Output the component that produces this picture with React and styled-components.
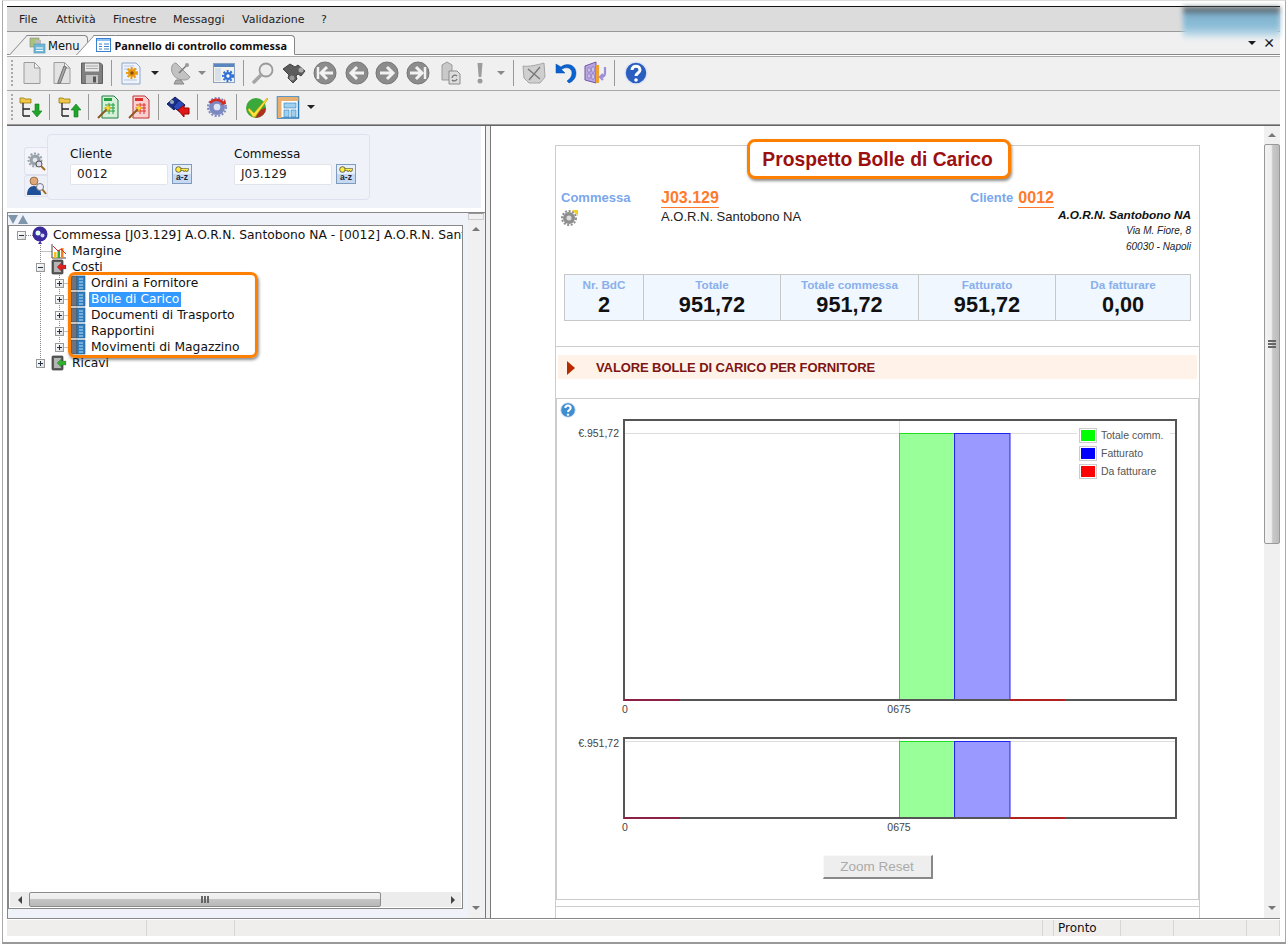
import React from "react";
import styled, { createGlobalStyle } from "styled-components";

const Global = createGlobalStyle`
  html, body { margin: 0; padding: 0; background: #fff; }
  *, *::before, *::after { box-sizing: border-box; }
  svg { flex: none; }
  body { font-family: "DejaVu Sans", sans-serif; font-size: 12px; color: #111; }
`;

const WEB = `"Liberation Sans", Arial, sans-serif`;

const Frame = styled.div`
  margin-left: 2px; width: 1284px; height: 944px;
  border: 1px solid #aaa; border-top: 1px solid #ddd; border-bottom: 2px solid #999;
  padding: 5px 5px 6px 4px; display: flex; flex-direction: column; overflow: hidden;
`;
const AppWin = styled.div`
  flex: 1; display: flex; flex-direction: column; border-top: 1px solid #111; background: #fff; min-height: 0;
`;
const MenuBar = styled.div`
  position: relative; height: 25px; flex: none; background: #dcdcdc; border-bottom: 1px solid #999;
  display: flex; align-items: center; padding-left: 12px; font-size: 11px; color: #222;
`;
const MenuItem = styled.span`
  width: ${p => p.$w}px; flex: none;
`;
const Blob = styled.div`
  position: absolute; right: 0; top: 0; width: 97px; height: 31px; z-index: 3;
  background: linear-gradient(180deg, #4a4a4a 0, #7fb2cf 28%, #8fbfd9 65%, #d8e8f0 100%);
  filter: blur(2.5px);
`;
const TabStrip = styled.div`
  height: 23px; flex: none; background: #f0f0f0; position: relative;
  border-bottom: 1px solid #888; padding: 2px 0 0 22px; display: flex; align-items: flex-end;
  &::after { content: ""; position: absolute; left: 0; right: 0; bottom: -3px; height: 1px; background: #aaa; }
`;
const Tab = styled.div`
  position: relative; height: 20px; display: flex; align-items: center; gap: ${p => (p.$active ? 4 : 2)}px;
  margin-left: ${p => p.$ml || 0}px; padding: 0 7px 0 0;
  background: ${p => (p.$active ? "#fff" : "#f0f0f0")};
  font: ${p => (p.$active ? `700 10.9px "Noto Sans", sans-serif` : `11.5px "DejaVu Sans", sans-serif`)}; color: #111;
  border: 1px solid #888; border-left: 0; border-bottom: ${p => (p.$active ? "1px solid #fff" : "0")};
  border-radius: 0 4px 0 0; margin-bottom: -1px; z-index: ${p => (p.$active ? 2 : 1)};
  &::before {
    content: ""; position: absolute; left: -11px; top: -1px; bottom: ${p => (p.$active ? "-1px" : "0")}; width: 22px;
    background: ${p => (p.$active ? "#fff" : "#f0f0f0")}; border-left: 1px solid #888; border-top: 1px solid #888;
    transform: skewX(-42deg); z-index: -1;
  }
`;
const TabTools = styled.div`
  position: absolute; right: 5px; top: 3px; display: flex; align-items: center; gap: 7px; font-size: 14px;
`;
const TabDown = styled.span`
  width: 0; height: 0; border-left: 4px solid transparent; border-right: 4px solid transparent; border-top: 4px solid #111;
`;
const Toolbar = styled.div`
  height: ${p => p.$h}px; flex: none; background: #f0f0f0; display: flex; align-items: center;
  border-bottom: ${p => (p.$line ? "1px solid #a8a8a8" : "0")}; margin-top: ${p => p.$mt || 0}px;
  padding-bottom: ${p => p.$pb || 0}px;
`;
const Grip = styled.div`
  width: 10px; height: 26px; flex: none;
  background: repeating-linear-gradient(180deg, #aaa 0 2px, transparent 2px 4px) 4px 0 / 2px 100% no-repeat;
`;
const Tool = styled.div`
  width: ${p => p.$w}px; flex: none; display: flex; justify-content: center; align-items: center;
`;
const Sep = styled.div`
  width: ${p => p.$w}px; height: 26px; flex: none; position: relative;
  &::after { content: ""; position: absolute; left: 50%; top: 0; bottom: 0; width: 1px; background: #999; }
`;
const Caret = styled.span`
  width: 0; height: 0; border-left: 4px solid transparent; border-right: 4px solid transparent;
  border-top: 4px solid ${p => (p.$dim ? "#888" : "#222")};
`;
const ThickLine = styled.div`
  height: 2px; flex: none; background: #999; border-bottom: 1px solid #666;
`;
const Main = styled.div`
  height: 792px; flex: none; display: flex; overflow: hidden;
`;
const LeftPanel = styled.div`
  width: 478px; flex: none; display: flex; flex-direction: column; background: #f0f2fa;
`;
const FilterArea = styled.div`
  height: 82px; flex: none; display: flex; align-items: flex-start; padding: 8px 0 0 17px; background: #f0f2fa; border-right: 4px solid #fff;
`;
const SideTabs = styled.div`
  width: 23px; flex: none; margin-top: 13px; display: flex; flex-direction: column;
`;
const SideTab = styled.div`
  height: ${p => p.$h}px; display: flex; align-items: center; justify-content: center;
  background: ${p => (p.$on ? "#f4f5fb" : "#eef0f8")};
  border: 1px solid #dfe2ee; border-right: 0; border-radius: 3px 0 0 3px;
`;
const Card = styled.div`
  width: 323px; height: 66px; flex: none; border: 1px solid #dfe2ee; border-radius: 4px; display: flex; padding: 10px 0 0 22px;
`;
const Field = styled.div`
  width: 164px; flex: none;
`;
const FieldLabel = styled.div`
  height: 19px; line-height: 18px; font-size: 12px; color: #111;
`;
const FieldRow = styled.div`
  display: flex; gap: 4px;
`;
const FieldInput = styled.div`
  width: 98px; height: 21px; background: #fff; border: 1px solid #e2e4ea; border-radius: 2px;
  padding-left: 6px; line-height: 19px; font-size: 12px; color: #222;
`;
const KeyBtn = styled.div`
  width: 20px; height: 20px; border: 1px solid #7f9cbf; display: flex; flex-direction: column; align-items: center;
  background: linear-gradient(180deg, #e6eefa 0 50%, #c6d9f3 50%);
  font: 700 8.5px/9px ${WEB}; color: #223; padding-top: 1px;
`;
const GapStrip = styled.div`
  height: 4px; flex: none; background: #fff;
`;
const TreeArea = styled.div`
  flex: 1; min-height: 0; display: flex; border-top: 1px solid #888;
`;
const TreePane = styled.div`
  width: 461px; flex: none; display: flex; flex-direction: column; padding: 0 0 9px 0; border-left: 1px solid #888;
`;
const TreeHead = styled.div`
  height: 12px; flex: none; display: flex; align-items: flex-start; padding-top: 2px;
`;
const Tri = styled.span`
  width: 0; height: 0; border-left: 5.5px solid transparent; border-right: 5.5px solid transparent;
  ${p => (p.$up ? "border-bottom: 9px solid #7f95ac;" : "border-top: 9px solid #7f95ac;")}
`;
const TreeBox = styled.div`
  width: 455px; flex: 1; min-height: 0; background: #fff; border: 1px solid #888; display: flex; flex-direction: column; padding-bottom: 1px;
`;
const TreeBody = styled.div`
  flex: 1; min-height: 0; position: relative; overflow: hidden; padding-top: 1px; font-size: 12.3px; white-space: nowrap;
`;
const Guides = styled.svg`
  position: absolute; left: 0; top: 0;
`;
const Row = styled.div`
  position: relative; height: 16px; display: flex; align-items: center; padding-left: ${p => p.$indent}px;
`;
const Expander = styled.span`
  width: 9px; height: 9px; flex: none; position: relative; margin-right: 6px;
  ${p => (p.$none ? "" : `border: 1px solid #999; background: linear-gradient(135deg, #fff, #ddd);
  &::before { content: ""; position: absolute; left: 1px; right: 1px; top: 3px; height: 1px; background: #234; }`)}
  ${p => (p.$plus ? `&::after { content: ""; position: absolute; top: 1px; bottom: 1px; left: 3px; width: 1px; background: #234; }` : "")}
`;
const RowLabel = styled.span`
  margin-left: 3px; padding: 0 2px; line-height: 15px;
  background: ${p => (p.$sel ? "#3399ff" : "transparent")}; color: ${p => (p.$sel ? "#fff" : "#111")};
`;
const Highlight = styled.div`
  position: relative;
  &::after {
    content: ""; position: absolute; left: 59px; top: -3px; width: 190px; height: 86px;
    border: 3px solid #ff8000; border-radius: 7px; box-shadow: 1px 2px 3px rgba(0,0,0,.45), inset 0 0 1px rgba(0,0,0,.2);
    pointer-events: none;
  }
`;
const HScroll = styled.div`
  height: 15px; flex: none; margin: 0 1px; background: #ececec; display: flex; align-items: center;
`;
const ArrowSlot = styled.div`
  width: ${p => p.$w}px; flex: none; display: flex; justify-content: center;
`;
const Arr = styled.span`
  width: 0; height: 0;
  ${p => p.$d === "l" && "border-top: 4px solid transparent; border-bottom: 4px solid transparent; border-right: 4px solid #444;"}
  ${p => p.$d === "r" && "border-top: 4px solid transparent; border-bottom: 4px solid transparent; border-left: 4px solid #444;"}
  ${p => p.$d === "u" && "border-left: 4px solid transparent; border-right: 4px solid transparent; border-bottom: 4px solid #777;"}
  ${p => p.$d === "d" && "border-left: 4px solid transparent; border-right: 4px solid transparent; border-top: 4px solid #777;"}
`;
const HThumb = styled.div`
  width: 352px; height: 15px; flex: none; border: 1px solid #8c8c8c; border-radius: 2px;
  background: linear-gradient(180deg, #f2f2f2 0, #ececec 45%, #c4c4c4 50%, #b8b8b8 100%);
  display: flex; align-items: center; justify-content: center; gap: 1px;
`;
const GripBar = styled.span`
  width: ${p => (p.$v ? "8px" : "2px")}; height: ${p => (p.$v ? "2px" : "7px")}; background: #666;
`;
const HSpacer = styled.div`
  flex: 1;
`;
const VScrollLeft = styled.div`
  width: 16px; flex: none; display: flex; flex-direction: column;
`;
const MiniBox = styled.div`
  height: 7px; flex: none; background: #f0f0f0; border: 1px solid #ccc; border-top: 1px solid #999;
`;
const VTrack = styled.div`
  flex: 1; background: #f0f0f0; display: flex; flex-direction: column; align-items: center; justify-content: space-between; padding: 7px 0 8px;
`;
const Splitter = styled.div`
  width: 6px; flex: none; background: #f0f0f0; border-left: 1px solid #777; border-right: 1px solid #777;
`;
const RightPanel = styled.div`
  flex: 1; min-width: 0; display: flex; background: #fff;
`;
const ReportArea = styled.div`
  flex: 1; min-width: 0; overflow: hidden; padding: 19px 0 0 64px;
`;
const Report = styled.div`
  width: 645px; height: 900px; border: 1px solid #ccc; font-family: ${WEB};
`;
const Title = styled.h1`
  width: 264px; height: 40px; margin: -7px 0 0 191px; padding: 2px 3px 0 0; background: #fff; border: 3px solid #ff8000; border-radius: 8px;
  box-shadow: 1px 2px 3px rgba(0,0,0,.45); display: flex; align-items: center; justify-content: center;
  font: 700 19.3px/1 ${WEB}; color: #9c1010; position: relative;
`;
const Head = styled.div`
  display: grid; grid-template-columns: 100px 309px 1fr; padding: 10px 7px 0 5px;
`;
const HLabel = styled.span`
  font: 700 13px/18px ${WEB}; color: #7ba7ec;
`;
const Code = styled.span`
  font: 700 16px/18px ${WEB}; color: #ff7a2c; border-bottom: 1px solid #ff7a2c; display: inline-block; margin-left: ${p => p.$ml || 0}px;
`;
const HCell = styled.div`
  height: 18px; display: flex; align-items: flex-start;
`;
const CustomerName = styled.div`
  font: 13px/17px ${WEB}; color: #222; padding-top: 1px;
`;
const GearCell = styled.div`
  padding-top: 2px;
`;
const AddressBlock = styled.div`
  text-align: right; font: italic 10px/16px ${WEB}; color: #222; padding: 1px 1px 0 0;
`;
const AddressName = styled.div`
  font: italic 700 11.8px/15px ${WEB}; color: #111;
`;
const Stats = styled.div`
  display: grid; grid-template-columns: 78px 137px 138px 137px 135px; width: 627px; height: 47px; margin: 19px 0 0 8px;
  border: 1px solid #c8c8c8; background: #f0f7ff;
`;
const Stat = styled.div`
  border-left: ${p => (p.$first ? "0" : "1px solid #c8c8c8")}; text-align: center; padding-top: 3px;
`;
const StatLabel = styled.div`
  font: 700 11.7px/14px ${WEB}; color: #8ab0ec;
`;
const StatValue = styled.div`
  font: 700 21.7px/26px ${WEB}; color: #111;
`;
const Rule = styled.div`
  height: 1px; background: #ccc; margin-top: ${p => p.$mt}px;
`;
const Section = styled.div`
  margin: 8px 2px 0; height: 24px; background: #fff2e8; display: flex; align-items: center; padding: 1px 0 0 9px;
  font: 700 13px/1 ${WEB}; color: #7c1515; letter-spacing: -0.1px;
`;
const SectionTri = styled.span`
  width: 0; height: 0; border-top: 7px solid transparent; border-bottom: 7px solid transparent; border-left: 8px solid #b82c00; margin-right: 21px;
`;
const ChartBox = styled.div`
  margin-top: 19px; height: 502px; border: 1px solid #ccc; display: flex; flex-direction: column;
`;
const HelpRow = styled.div`
  height: 20px; flex: none; padding: 3px 0 0 3px;
`;
const ChartWrap = styled.div`
  position: relative; height: ${p => p.$h}px; flex: none; margin-bottom: ${p => p.$mb}px;
`;
const Legend = styled.div`
  position: absolute; left: 520px; top: 8px; width: 93px; background: #fff; display: flex; flex-direction: column; gap: 3px; padding: 1px 0 1px 2px;
`;
const LegendItem = styled.div`
  display: flex; align-items: center; gap: 4px; font: 10.5px/15px ${WEB}; color: #555;
`;
const Swatch = styled.span`
  width: 18px; height: 15px; border: 1px solid #ccc; background: ${p => p.$c}; box-shadow: inset 0 0 0 1px #fff;
`;
const ZoomBtn = styled.div`
  align-self: center; width: 110px; height: 24px; flex: none; background: #eee;
  border: 1px solid #f8f8f8; border-right: 2px solid #888; border-bottom: 2px solid #888;
  display: flex; align-items: center; justify-content: center; font: 13.5px/1 ${WEB}; color: #aaa;
`;
const VScrollRight = styled.div`
  width: 16px; flex: none; background: #f0f0f0; display: flex; flex-direction: column; align-items: center; padding: 7px 0 8px;
`;
const VThumb = styled.div`
  width: 16px; height: 400px; flex: none; margin-top: 7px; border: 1px solid #999; border-radius: 2px;
  background: linear-gradient(90deg, #f2f2f2 0, #eee 45%, #c8c8c8 55%, #bbb 100%);
  display: flex; flex-direction: column; align-items: center; justify-content: center; gap: 1px;
`;
const VSpacer = styled.div`
  flex: 1;
`;
const StatusLine = styled.div`
  height: 2px; flex: none; border-top: 1px solid #888; background: #fff;
`;
const StatusBar = styled.div`
  height: 16px; flex: none; background: #f0eded; display: flex; font-size: 12px;
`;
const StatusCell = styled.div`
  width: ${p => p.$w}px; flex: ${p => (p.$w ? "none" : "1")}; border-right: 1px solid #d6d6d6; padding-left: ${p => p.$pl || 0}px; line-height: 16px;
`;

const S = ({ children, w = 24, h = 24, vb = "0 0 24 24" }) => (
  <svg width={w} height={h} viewBox={vb}>{children}</svg>
);
const Gear = ({ x, y, r, c, hole = "#fff" }) => (
  <g>
    <circle cx={x} cy={y} r={r} fill={c} />
    <circle cx={x} cy={y} r={r + 1} fill="none" stroke={c} strokeWidth="2" strokeDasharray="2 1.6" />
    <circle cx={x} cy={y} r={r * 0.42} fill={hole} />
  </g>
);
const DocI = () => <S><path d="M4 1.500h10.500l5.500 5.500v15.500H4z" fill="#e3e3e3" stroke="#9c9c9c" /><path d="M14.500 1.500V7H20z" fill="#f6f6f6" stroke="#9c9c9c" /></S>;
const EditI = () => <S><path d="M4 1.500h10.500l5.500 5.500v15.500H4z" fill="#e3e3e3" stroke="#9c9c9c" /><path d="M14.500 1.500V7H20z" fill="#f6f6f6" stroke="#9c9c9c" /><path d="M8 21 14 5l2.400 1-6 16-2.400.5z" fill="#a8a8a8" stroke="#6f6f6f" /></S>;
const SaveI = () => <S><path d="M1.500 2h19l2 2v18.500h-21z" fill="#7f7f7f" stroke="#5f5f5f" /><rect x="5" y="2.500" width="14" height="8" fill="#e6e6e6" /><path d="M6 5h12M6 7.500h12" stroke="#aaa" /><rect x="6" y="14" width="12" height="8.500" fill="#c4c4c4" /><rect x="13" y="15.500" width="3" height="6" fill="#555" /></S>;
const DocGearI = () => <S><path d="M3 2h14l4 4v17H3z" fill="#eef4ff" stroke="#8fa6c8" /><path d="M5 5h10M5 8h13M5 19h13" stroke="#b5c6de" /><Gear x={13} y={12} r={4} c="#e8980e" hole="#8a4a10" /></S>;
const SatI = () => <S><path d="M4 5c-2 7 3 14 12 14 3 0 5-1 6-3L8 2C6 2 5 3 4 5z" fill="#c2c2c2" stroke="#999" /><path d="M11 12l7-7" stroke="#777" strokeWidth="1.500" /><path d="M8 19l-2 4h10l-3-4z" fill="#aaa" stroke="#888" /><circle cx="19" cy="4" r="2" fill="#999" /></S>;
const WinGearI = () => <S><rect x="1.500" y="2.500" width="21" height="19" fill="#f4f4ea" stroke="#8aa2c2" /><rect x="2" y="3" width="20" height="3" fill="#5a86c0" /><rect x="3" y="7" width="6" height="13" fill="#d6dfea" /><Gear x={16} y={15} r={4} c="#2f6fd6" /></S>;
const LensI = () => <S><circle cx="15" cy="9" r="6.500" fill="#eee" stroke="#9a9a9a" strokeWidth="1.800" /><path d="M10 14 3 21" stroke="#a5a5a5" strokeWidth="3.500" strokeLinecap="round" /></S>;
const BinoI = () => <S><path d="M1 8 8 3l5 3 3-2 7 6-4 5-3-2-2 2 1 3-4 4-5-5 1-3z" fill="#5c5c5c" stroke="#444" /><circle cx="19" cy="9" r="2.500" fill="#aaa" /><circle cx="10" cy="17" r="2.500" fill="#999" /></S>;
const NavI = ({ dir, bar }) => (
  <S>
    <circle cx="12" cy="12" r="11" fill="#8c8c8c" stroke="#777" />
    <g transform={dir === "l" ? "translate(24 0) scale(-1 1)" : undefined} stroke="#f2f2f2" strokeWidth="3" fill="none">
      <path d={bar ? "M4 12h11M10 6l6 6-6 6" : "M5 12h13M12 6l6 6-6 6"} />
      {bar && <path d="M19 6v12" strokeWidth="2.500" />}
    </g>
  </S>
);
const ClipI = () => <S><path d="M3 4l5-3 5 3v15H3z" fill="#c9c9c9" stroke="#9a9a9a" /><path d="M10 10h8l3 3v10H10z" fill="#ddd" stroke="#8c8c8c" /><path d="M13 17a3 3 0 0 1 5-2M18 18a3 3 0 0 1-5 1" fill="none" stroke="#777" strokeWidth="1.300" /></S>;
const ExclI = () => <S><path d="M9.500 2h5l-1.200 14h-2.600z" fill="#9c9c9c" /><circle cx="12" cy="20" r="2.500" fill="#9c9c9c" /></S>;
const TrashI = () => <S><path d="M1 5c6 1 14-1 21-3l1 14-5 6H7L2 17z" fill="#cfcfcf" stroke="#a5a5a5" /><path d="M6 8l12 10M18 6 7 19" stroke="#777" strokeWidth="1.300" /></S>;
const UndoI = () => <S><path d="M3 3v9h9L8.500 8.500C13 5 19 7 19 12c0 3-2 6-5 8l2 2c5-2 7-6 7-10 0-8-9-11-15-6z" fill="#0a62cf" stroke="#0a4fa8" strokeWidth=".5" /></S>;
const DoorI = () => <S><path d="M2 5l11-4v21L2 19z" fill="#b9a5e0" stroke="#6e57a8" /><path d="M5 7h2v4H5zM9 6h2v5H9zM5 13h2v4H5zM9 13h2v5H9z" fill="#f4f0ff" stroke="#6e57a8" strokeWidth=".6" /><rect x="13" y="4" width="3" height="18" fill="#f0a030" /><path d="M22 6v6c0 3-2 4-4 4m2-3-3 3 3 3" fill="none" stroke="#9b8fd8" strokeWidth="2.200" /></S>;
const HelpI = ({ s = 24 }) => (
  <svg width={s} height={s} viewBox="0 0 24 24">
    <circle cx="12" cy="12" r="11" fill={s < 20 ? "#3f8fd0" : "#2a5fc0"} stroke="#dfe6f4" strokeWidth="1.500" />
    <path d="M8 9c0-5 8-5 8 0 0 3-4 3-4 6" fill="none" stroke="#fff" strokeWidth="3" />
    <circle cx="12" cy="19" r="1.800" fill="#fff" />
  </svg>
);
const TreeArrowI = ({ up }) => (
  <S>
    <path d="M2 3h4l1 1h6v4H2z" fill="#f0c848" stroke="#9a7a10" strokeWidth=".8" />
    <path d="M5 8v13M5 14h7M5 21h7" stroke="#222" strokeWidth="1.300" fill="none" />
    <path d={up ? "M14 15l5-6 5 6h-3v7h-4v-7z" : "M17 9h4v7h3l-5 6-5-6h3z"} fill="#1fa52a" stroke="#137a1c" strokeWidth=".6" />
  </S>
);
const SheetWandI = ({ c, bg, dark }) => (
  <S>
    <path d="M5 1h12l4 4v18H5z" fill={bg} stroke={dark} />
    <rect x="7" y="3" width="8" height="3" fill={c} />
    <path d="M8 10h10M8 13h10M8 16h10M12 8v11M16 8v11" stroke={c} strokeWidth="1" />
    <path d="M1 23 10 14" stroke="#8a5a20" strokeWidth="2" />
    <path d="M11 9l1 3 3 1-3 1-1 3-1-3-3-1 3-1z" fill="#ffd83a" stroke="#d0a010" strokeWidth=".4" />
  </S>
);
const BinoRedI = () => <S><path d="M1 9 9 2l5 4-6 9z" fill="#1b2f8e" stroke="#10205e" /><path d="M7 12l6-7 6 5-5 7z" fill="#2b49b8" stroke="#10205e" /><circle cx="6" cy="7" r="2" fill="#9ab" /><path d="M12 15l6-5v3h5v6h-5v3z" fill="#e01818" stroke="#900" /></S>;
const SyncGearI = () => <S><Gear x={12} y={12} r={8} c="#7c88c0" hole="#dfe4f5" /><path d="M5 8a8 8 0 0 1 13 0" fill="none" stroke="#d82a20" strokeWidth="2.500" /><path d="M16 10l5-1-1-5z" fill="#d82a20" /></S>;
const CheckI = () => <S><circle cx="11" cy="13" r="10" fill="#3aa83a" /><path d="M11 23a10 10 0 0 0 10-10c-4 0-9 4-10 10z" fill="#b03020" /><path d="M4 13l5 5L22 3l1 1-13 18h-2L3 15z" fill="#ffe23a" stroke="#b89a10" strokeWidth=".6" /></S>;
const LayoutI = () => <S><rect x="1.500" y="2" width="21" height="21" fill="#fff" stroke="#2a7ab8" strokeWidth="1.500" /><rect x="1.500" y="2" width="21" height="4" fill="#e8b070" /><rect x="1.500" y="6" width="4" height="17" fill="#e8b070" /><rect x="8" y="8" width="12" height="5" fill="#9fd0f0" stroke="#2a7ab8" strokeWidth=".6" /><rect x="8" y="15" width="5" height="7" fill="#9fd0f0" stroke="#2a7ab8" strokeWidth=".6" /><rect x="15" y="15" width="5" height="7" fill="#9fd0f0" stroke="#2a7ab8" strokeWidth=".6" /></S>;
const MenuTabI = () => <svg width="17" height="17" viewBox="0 0 17 17"><rect x="1" y="1" width="9" height="9" fill="#a9c47a" stroke="#888" strokeWidth=".6" /><rect x="6" y="3" width="6" height="5" fill="#bbb" /><rect x="5" y="7" width="11" height="9" fill="#6fb7d8" stroke="#5a90b0" strokeWidth=".6" /><path d="M7 11h7M7 13.500h7" stroke="#fff" /></svg>;
const PanelTabI = () => <svg width="15" height="14" viewBox="0 0 15 14"><rect x=".5" y=".5" width="14" height="13" fill="#fff" stroke="#3a80d0" /><rect x="1" y="1" width="13" height="2" fill="#8ec0f0" /><path d="M3 6h3M8 6h5M3 8.500h3M8 8.500h5M3 11h3M8 11h5" stroke="#3a80d0" /></svg>;
const KeyI = () => <svg width="14" height="7" viewBox="0 0 14 7"><circle cx="3.500" cy="3.500" r="2.800" fill="#ffee40" stroke="#333" strokeWidth=".7" /><path d="M6 2.500h7.500v2h-1v1h-1.500v-1h-1v1H8.500v-1H6z" fill="#ffee40" stroke="#333" strokeWidth=".5" /></svg>;
const GearSearchI = () => <svg width="20" height="20" viewBox="0 0 20 20"><Gear x={9} y={9} r={5.500} c="#9aa2ac" hole="#e6e8ee" /><circle cx="13" cy="13" r="3" fill="#dde" stroke="#555" /><path d="M15 15l4 4" stroke="#a06a20" strokeWidth="2" /></svg>;
const UserSearchI = () => <svg width="21" height="20" viewBox="0 0 21 20"><circle cx="8" cy="5" r="4" fill="#e0a878" stroke="#642" strokeWidth=".6" /><path d="M1 19c0-6 3-9 7-9s7 3 7 9z" fill="#1f4f98" /><circle cx="14" cy="11" r="3.500" fill="#eef" stroke="#777" /><path d="M16.500 13.500 20 18" stroke="#a06a20" strokeWidth="2" /></svg>;
const RootI = () => <svg width="16" height="18" viewBox="0 0 16 18"><circle cx="8" cy="8" r="7.500" fill="#3a2a9c" /><path d="M8 15l-2 3h4z" fill="#3a2a9c" /><circle cx="6" cy="7" r="2.500" fill="#dfe" /><circle cx="10.500" cy="9.500" r="2" fill="#cfd8f0" /></svg>;
const ChartI = () => <svg width="16" height="16" viewBox="0 0 16 16"><path d="M1 1v14h14" fill="none" stroke="#444" /><rect x="3" y="9" width="2.500" height="6" fill="#f0c020" /><rect x="6.500" y="7" width="2.500" height="8" fill="#38a838" /><rect x="10" y="5" width="2.500" height="10" fill="#f08020" /><path d="M2 3l5 5 3-2 5 5" stroke="#e02020" fill="none" /></svg>;
const SafeI = ({ c }) => <svg width="16" height="16" viewBox="0 0 16 16"><rect x="1" y="1" width="11" height="14" rx="1" fill="#5c5c5c" stroke="#333" strokeWidth=".7" /><rect x="3" y="3" width="7" height="10" fill="#b5b5b5" /><path d="M6 8l4.500-4.500V6H15v4h-4.500v2.500z" fill={c} stroke="#3338" strokeWidth=".4" /></svg>;
const BookI = () => <svg width="16" height="16" viewBox="0 0 16 16"><rect x="1" y="1" width="6" height="14" fill="#6c7480" stroke="#3c4450" strokeWidth=".6" /><rect x="7" y="1" width="8" height="14" fill="#2f7fc0" stroke="#245a8c" strokeWidth=".6" /><path d="M9 4h4M9 7h4M9 10h4M9 13h4" stroke="#bfe0f8" /></svg>;
const ReportGearI = () => <svg width="18" height="18" viewBox="0 0 18 18"><Gear x={8} y={9} r={6} c="#8e8e8e" hole="#ddd" /><path d="M11 1h6v6z" fill="#f4d020" /></svg>;

const W = 639;
const Plot = ({ h, grid, labelY }) => {
  const bot = h - 1;
  return (
    <svg width={W} height={h + 18} viewBox={`0 0 ${W} ${h + 18}`} style={{ display: "block" }}>
      <line x1="342.500" y1="0" x2="342.500" y2={grid} stroke="#ddd" />
      <line x1="68" y1={grid + 0.5} x2="618" y2={grid + 0.5} stroke="#ddd" />
      <rect x="342.500" y={grid + 0.5} width="55" height={bot - grid - 0.5} fill="#99ff99" stroke="#22dd22" />
      <rect x="397.500" y={grid + 0.5} width="55.500" height={bot - grid - 0.5} fill="#9999ff" stroke="#2222ee" />
      <rect x="67" y="1" width="552" height={h - 2} fill="none" stroke="#555" strokeWidth="2" />
      <line x1="67" y1={h - 1} x2="123" y2={h - 1} stroke="#8b2245" strokeWidth="2" />
      <line x1="453" y1={h - 1} x2="508" y2={h - 1} stroke="#b02222" strokeWidth="2" />
      <g fontFamily={WEB} fontSize="10.500" fill="#444">
        <text x="62" y={labelY} textAnchor="end">€.951,72</text>
        <text x="68" y={h + 12} textAnchor="middle">0</text>
        <text x="342" y={h + 12} textAnchor="middle">0675</text>
      </g>
    </svg>
  );
};

const Tools1 = () => (
  <Toolbar $h={34} $mt={2} $pb={2} $line>
    <Grip />
    <Tool $w={30}><DocI /></Tool><Tool $w={30}><EditI /></Tool><Tool $w={30}><SaveI /></Tool>
    <Sep $w={8} />
    <Tool $w={32}><DocGearI /></Tool><Tool $w={16}><Caret /></Tool>
    <Tool $w={34}><SatI /></Tool><Tool $w={10}><Caret $dim /></Tool>
    <Tool $w={34}><WinGearI /></Tool><Sep $w={4} />
    <Tool $w={36}><LensI /></Tool><Tool $w={26}><BinoI /></Tool>
    <Tool $w={36}><NavI dir="l" bar /></Tool><Tool $w={28}><NavI dir="l" /></Tool>
    <Tool $w={32}><NavI dir="r" /></Tool><Tool $w={30}><NavI dir="r" bar /></Tool>
    <Tool $w={36}><ClipI /></Tool><Tool $w={22}><ExclI /></Tool><Tool $w={20}><Caret $dim /></Tool>
    <Sep $w={4} />
    <Tool $w={38}><TrashI /></Tool><Tool $w={24}><UndoI /></Tool><Tool $w={35}><DoorI /></Tool>
    <Sep $w={4} />
    <Tool $w={40}><HelpI /></Tool>
  </Toolbar>
);
const Tools2 = () => (
  <Toolbar $h={33} $pb={1}>
    <Grip />
    <Tool $w={26}><TreeArrowI /></Tool><Sep $w={12} />
    <Tool $w={28}><TreeArrowI up /></Tool><Sep $w={10} />
    <Tool $w={32}><SheetWandI c="#20a040" bg="#d6f0da" dark="#208040" /></Tool>
    <Tool $w={30}><SheetWandI c="#e03030" bg="#fbd0d0" dark="#c03030" /></Tool><Sep $w={6} />
    <Tool $w={34}><BinoRedI /></Tool><Sep $w={4} />
    <Tool $w={35}><SyncGearI /></Tool><Sep $w={4} />
    <Tool $w={38}><CheckI /></Tool><Tool $w={24}><LayoutI /></Tool><Tool $w={22}><Caret /></Tool>
  </Toolbar>
);

const children = ["Ordini a Fornitore", "Bolle di Carico", "Documenti di Trasporto", "Rapportini", "Movimenti di Magazzino"];
const stats = [["Nr. BdC", "2"], ["Totale", "951,72"], ["Totale commessa", "951,72"], ["Fatturato", "951,72"], ["Da fatturare", "0,00"]];

export default function App() {
  return (
    <Frame>
      <Global />
      <AppWin>
        <MenuBar>
          {[["File", 37], ["Attività", 57], ["Finestre", 60], ["Messaggi", 69], ["Validazione", 79], ["?", 20]].map(([t, w]) => <MenuItem key={t} $w={w}>{t}</MenuItem>)}
          <Blob />
        </MenuBar>
        <TabStrip>
          <Tab><MenuTabI />Menu</Tab>
          <Tab $active $ml={8}><PanelTabI />Pannello di controllo commessa</Tab>
          <TabTools><TabDown />✕</TabTools>
        </TabStrip>
        <Tools1 />
        <Tools2 />
        <ThickLine />
        <Main>
          <LeftPanel>
            <FilterArea>
              <SideTabs>
                <SideTab $h={28} $on><GearSearchI /></SideTab>
                <SideTab $h={22}><UserSearchI /></SideTab>
              </SideTabs>
              <Card>
                <Field>
                  <FieldLabel>Cliente</FieldLabel>
                  <FieldRow><FieldInput>0012</FieldInput><KeyBtn><KeyI />a-z</KeyBtn></FieldRow>
                </Field>
                <Field>
                  <FieldLabel>Commessa</FieldLabel>
                  <FieldRow><FieldInput>J03.129</FieldInput><KeyBtn><KeyI />a-z</KeyBtn></FieldRow>
                </Field>
              </Card>
            </FilterArea>
            <GapStrip />
            <TreeArea>
              <TreePane>
                <TreeHead><Tri /><Tri $up /></TreeHead>
                <TreeBox>
                  <TreeBody>
                    <Guides width="80" height="145">
                      <g stroke="#888" strokeDasharray="1 1" fill="none">
                        <path d="M17 9.500h8M31.500 15v122M31.500 25.500h11M50.500 41v80M50.500 57.500h10M50.500 73.500h10M50.500 89.500h10M50.500 105.500h10M50.500 121.500h10" />
                      </g>
                    </Guides>
                    <Row $indent={8}><Expander /><RootI /><RowLabel>Commessa [J03.129] A.O.R.N. Santobono NA - [0012] A.O.R.N. Santobono NA</RowLabel></Row>
                    <Row $indent={27}><Expander $none /><ChartI /><RowLabel>Margine</RowLabel></Row>
                    <Row $indent={27}><Expander /><SafeI c="#e02020" /><RowLabel>Costi</RowLabel></Row>
                    <Highlight>
                      {children.map((t, i) => (
                        <Row $indent={46} key={t}><Expander $plus /><BookI /><RowLabel $sel={i === 1}>{t}</RowLabel></Row>
                      ))}
                    </Highlight>
                    <Row $indent={27}><Expander $plus /><SafeI c="#30b030" /><RowLabel>Ricavi</RowLabel></Row>
                  </TreeBody>
                  <HScroll>
                    <ArrowSlot $w={19}><Arr $d="l" /></ArrowSlot>
                    <HThumb><GripBar /><GripBar /><GripBar /></HThumb>
                    <HSpacer />
                    <ArrowSlot $w={16}><Arr $d="r" /></ArrowSlot>
                  </HScroll>
                </TreeBox>
              </TreePane>
              <VScrollLeft>
                <MiniBox />
                <VTrack><Arr $d="u" /><Arr $d="d" /></VTrack>
              </VScrollLeft>
            </TreeArea>
          </LeftPanel>
          <Splitter />
          <RightPanel>
            <ReportArea>
              <Report>
                <Title>Prospetto Bolle di Carico</Title>
                <Head>
                  <HCell><HLabel>Commessa</HLabel></HCell>
                  <HCell><Code>J03.129</Code></HCell>
                  <HCell><HLabel>Cliente</HLabel><Code $ml={5}>0012</Code></HCell>
                  <GearCell><ReportGearI /></GearCell>
                  <CustomerName>A.O.R.N. Santobono NA</CustomerName>
                  <AddressBlock>
                    <AddressName>A.O.R.N. Santobono NA</AddressName>
                    <div>Via M. Fiore, 8</div>
                    <div>60030 - Napoli</div>
                  </AddressBlock>
                </Head>
                <Stats>
                  {stats.map(([l, v], i) => (
                    <Stat key={l} $first={i === 0}><StatLabel>{l}</StatLabel><StatValue>{v}</StatValue></Stat>
                  ))}
                </Stats>
                <Rule $mt={25} />
                <Section><SectionTri />VALORE BOLLE DI CARICO PER FORNITORE</Section>
                <ChartBox>
                  <HelpRow><HelpI s={16} /></HelpRow>
                  <ChartWrap $h={300} $mb={18}>
                    <Plot h={282} grid={14} labelY={18} />
                    <Legend>
                      <LegendItem><Swatch $c="#00ff00" />Totale comm.</LegendItem>
                      <LegendItem><Swatch $c="#0000ff" />Fatturato</LegendItem>
                      <LegendItem><Swatch $c="#ff0000" />Da fatturare</LegendItem>
                    </Legend>
                  </ChartWrap>
                  <ChartWrap $h={100} $mb={18}>
                    <Plot h={82} grid={4} labelY={10} />
                  </ChartWrap>
                  <ZoomBtn>Zoom Reset</ZoomBtn>
                </ChartBox>
                <Rule $mt={6} />
              </Report>
            </ReportArea>
            <VScrollRight>
              <Arr $d="u" />
              <VThumb><GripBar $v /><GripBar $v /><GripBar $v /></VThumb>
              <VSpacer />
              <Arr $d="d" />
            </VScrollRight>
          </RightPanel>
        </Main>
        <StatusLine />
        <StatusBar>
          <StatusCell $w={140} />
          <StatusCell $w={88} />
          <StatusCell $w={808} />
          <StatusCell $w={11} />
          <StatusCell $w={67} $pl={4}>Pronto</StatusCell>
          <StatusCell $w={53} />
          <StatusCell $w={73} />
          <StatusCell />
        </StatusBar>
      </AppWin>
    </Frame>
  );
}
